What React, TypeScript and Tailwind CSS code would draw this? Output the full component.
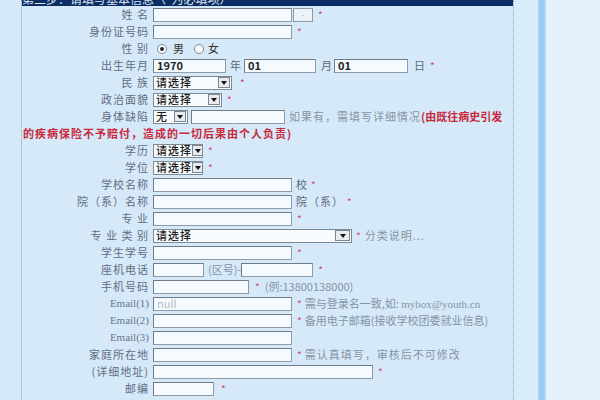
import React from 'react';

const cjk = { fontFamily: '"Noto Sans CJK SC", "Noto Sans", sans-serif' };

function Input({ w, value, muted, className = '' }: { w: number; value?: string; muted?: boolean; className?: string }) {
  return (
    <div
      className={`h-[14px] border border-[#8f9ca8] border-t-[#6f7c88] border-l-[#6f7c88] bg-[#f4fafd] flex items-center pl-[3px] text-[11px] leading-none whitespace-nowrap overflow-hidden ${muted ? 'text-[#b4bcc4] font-normal' : 'text-[#222] font-bold'} ${className}`}
      style={{ width: w }}
    >
      {value}
    </div>
  );
}

function Arrow({ w = 12 }: { w?: number }) {
  return (
    <div
      className="h-[11px] shrink-0 border border-[#7d8791] bg-[#e9ebee] flex items-center justify-center mr-[1px]"
      style={{ width: w }}
    >
      <svg width="6" height="4" viewBox="0 0 6 4">
        <path d="M0 0h6L3 4z" fill="#111" />
      </svg>
    </div>
  );
}

function Select({ w, text, arrowW }: { w: number; text: string; arrowW?: number }) {
  return (
    <div
      className="h-[14px] border border-[#7d8a96] bg-[#f7fbfe] flex items-center justify-between pl-[2px] text-[11px] leading-none font-medium text-[#1c1c1c] whitespace-nowrap overflow-hidden"
      style={{ width: w }}
    >
      <span className="tracking-[1px]">{text}</span>
      <Arrow w={arrowW} />
    </div>
  );
}

function Star({ className = 'ml-[5px]' }: { className?: string }) {
  return <span className={`text-[10px] text-[#d2457a] leading-none ${className}`}>*</span>;
}

function Hint({ children, className = 'ml-[4px]' }: { children: React.ReactNode; className?: string }) {
  return <span className={`text-[11px] text-[#8595a4] whitespace-nowrap leading-none ${className}`}>{children}</span>;
}

function Text({ children, className = '' }: { children: React.ReactNode; className?: string }) {
  return <span className={`text-[11px] text-[#5b6a7a] whitespace-nowrap leading-none ${className}`}>{children}</span>;
}

function Radio({ checked }: { checked?: boolean }) {
  return (
    <span className="w-[10px] h-[10px] rounded-full border border-[#7b8794] bg-[#fbfdff] flex items-center justify-center">
      {checked && <span className="w-[4px] h-[4px] rounded-full bg-[#222]" />}
    </span>
  );
}

function Row({ label, serif, children }: { label: string; serif?: boolean; children?: React.ReactNode }) {
  return (
    <div className="h-[17px] flex items-center">
      <div
        className={`w-[127px] mr-[4px] text-right whitespace-nowrap leading-none ${serif ? 'text-[11px] text-[#6a7686]' : 'text-[11px] tracking-[1px] text-[#5f6e7e]'}`}
        style={serif ? { fontFamily: '"Liberation Serif", serif' } : undefined}
      >
        {label}
      </div>
      <div className="flex items-center">{children}</div>
    </div>
  );
}

export default function App() {
  return (
    <div className="w-[600px] h-[400px] overflow-hidden flex bg-[#d6e9f9]" style={cjk}>
      <div className="w-[21px] bg-[#d6e9f9]" />

      <div className="w-[493px] border-l border-r border-dotted border-[#98a3af] bg-[#d6e9f9] flex flex-col">
        <div className="h-[6px] bg-[#0b2d63] overflow-hidden">
          <div className="-mt-[7px] text-[12px] leading-[12px] text-[#dfe6f0] whitespace-nowrap">
            第三步：请填写基本信息（*为必填项）
          </div>
        </div>

        <Row label="姓 名">
          <Input w={139} />
          <div className="ml-[1px] w-[20px] h-[14px] border border-[#8f9ca8] bg-[#eef3f7] flex items-center justify-center text-[8px] text-[#a0a8b0]">
            -
          </div>
          <Star />
        </Row>

        <Row label="身份证号码">
          <Input w={139} />
          <Star />
        </Row>

        <Row label="性 别">
          <span className="ml-[4px]"><Radio checked /></span>
          <Text className="ml-[6px] text-[#333]">男</Text>
          <span className="ml-[10px]"><Radio /></span>
          <Text className="ml-[4px] text-[#333]">女</Text>
        </Row>

        <Row label="出生年月">
          <Input w={73} value="1970" />
          <Text className="ml-[4px]">年</Text>
          <Input w={72} value="01" className="ml-[3px]" />
          <Text className="ml-[5px]">月</Text>
          <Input w={74} value="01" className="ml-[2px]" />
          <Text className="ml-[6px]">日</Text>
          <Star className="ml-[5px]" />
        </Row>

        <Row label="民 族">
          <Select w={79} text="请选择" />
          <Star className="ml-[8px]" />
        </Row>

        <Row label="政治面貌">
          <Select w={69} text="请选择" />
          <Star />
        </Row>

        <Row label="身体缺陷">
          <Select w={35} text="无" />
          <Input w={94} className="ml-[3px]" />
          <Hint className="ml-[4px] text-[11px] tracking-[1px]">如果有，需填写详细情况</Hint>
          <span className="text-[11px] font-bold text-[#c8283c] whitespace-nowrap leading-none">(由既往病史引发</span>
        </Row>

        <div className="h-[17px] flex items-center pl-[1px]">
          <span className="text-[11px] tracking-[1px] font-bold text-[#c8283c] whitespace-nowrap leading-none">
            的疾病保险不予赔付，造成的一切后果由个人负责)
          </span>
        </div>

        <Row label="学历">
          <Select w={50} text="请选择" />
          <Star />
        </Row>

        <Row label="学位">
          <Select w={50} text="请选择" />
          <Star />
        </Row>

        <Row label="学校名称">
          <Input w={139} />
          <Text className="ml-[4px]">校</Text>
          <Star className="ml-[4px]" />
        </Row>

        <Row label="院（系）名称">
          <Input w={139} />
          <Text className="ml-[4px] tracking-[1px]">院（系）</Text>
          <Star className="ml-[3px]" />
        </Row>

        <Row label="专 业">
          <Input w={139} />
          <Star />
        </Row>

        <Row label="专 业 类 别">
          <Select w={199} text="请选择" arrowW={15} />
          <Star className="ml-[4px]" />
          <Hint className="ml-[4px] text-[#5b6672] tracking-[1px]">分类说明...</Hint>
        </Row>

        <Row label="学生学号">
          <Input w={139} />
          <Star />
        </Row>

        <Row label="座机电话">
          <Input w={51} />
          <Hint className="ml-[4px]">(区号)-</Hint>
          <Input w={72} />
          <Star />
        </Row>

        <Row label="手机号码">
          <Input w={96} />
          <Star className="ml-[6px]" />
          <Hint className="ml-[5px] text-[10px]">(例:13800138000)</Hint>
        </Row>

        <Row label="Email(1)" serif>
          <Input w={139} value="null" muted />
          <Star />
          <Hint className="ml-[3px]">
            需与登录名一致,如: <span style={{ fontFamily: '"Liberation Serif", serif' }}>mybox@youth.cn</span>
          </Hint>
        </Row>

        <Row label="Email(2)" serif>
          <Input w={139} />
          <Star />
          <Hint className="ml-[3px]">备用电子邮箱(接收学校团委就业信息)</Hint>
        </Row>

        <Row label="Email(3)" serif>
          <Input w={139} />
        </Row>

        <Row label="家庭所在地">
          <Input w={139} />
          <Star />
          <Hint className="ml-[3px] tracking-[1px]">需认真填写，审核后不可修改</Hint>
        </Row>

        <Row label="(详细地址)">
          <Input w={220} />
          <Star />
        </Row>

        <Row label="邮编">
          <Input w={61} />
          <Star className="ml-[7px]" />
        </Row>
      </div>

      <div className="w-[24px] bg-[#d9ecfa]" />
      <div className="w-[8px] bg-gradient-to-r from-[#a9d4f4] via-[#96c9f0] to-[#b3daf6]" />
      <div className="flex-1 bg-[#e4f2fd]" />
    </div>
  );
}
